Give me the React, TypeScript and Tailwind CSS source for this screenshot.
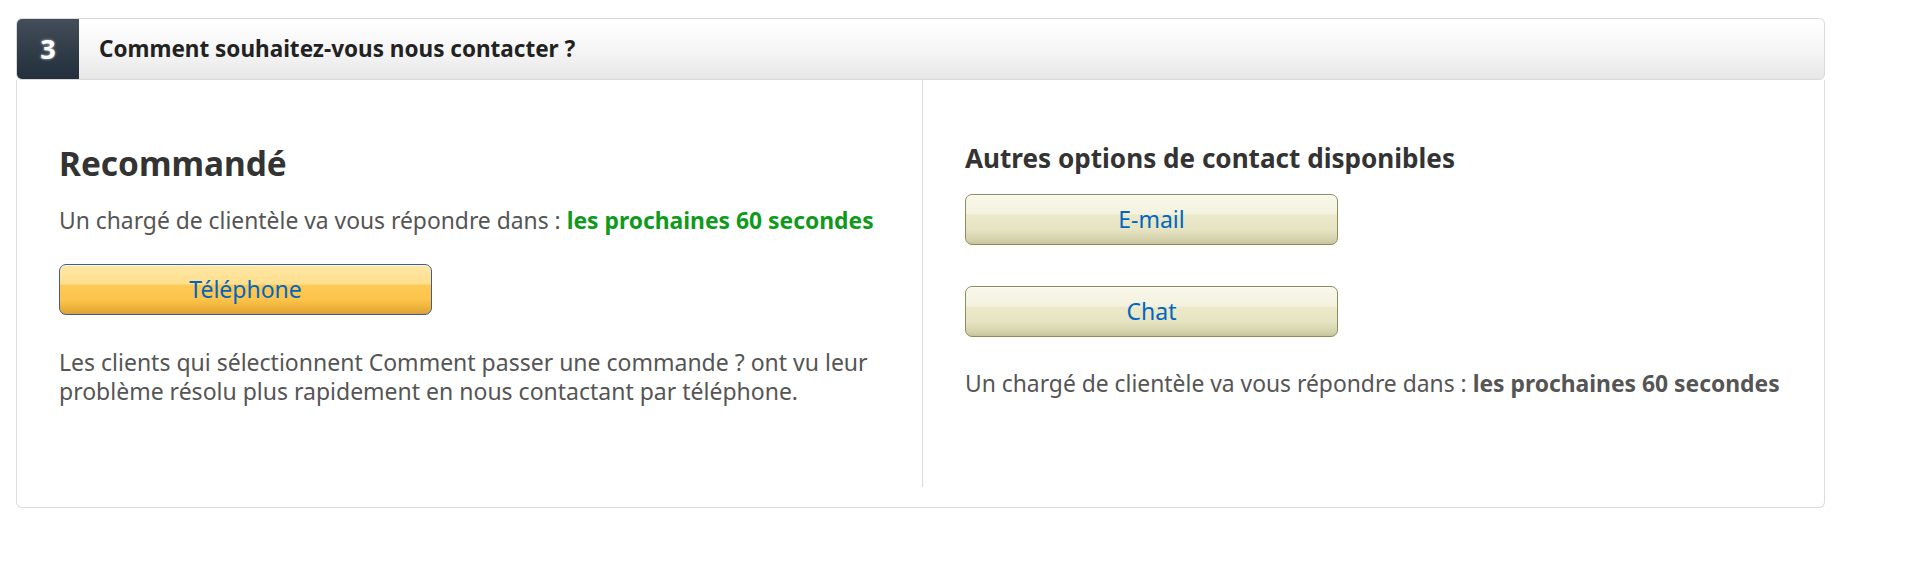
import React from "react";

const font = { fontFamily: '"Noto Sans", "Open Sans", Arial, sans-serif' };

const secondaryBtn =
  "w-[373px] h-[51px] rounded-[7px] border border-[#8e8c5e] bg-[linear-gradient(to_bottom,#f8f7ea_0%,#f4f2df_38%,#ebe9c9_42%,#e6e4c2_70%,#d4d2ac_92%,#c6c49c_100%)] shadow-[inset_0_1px_0_rgba(255,255,255,0.7)] text-[23px] text-[#0066c0] flex items-center justify-center";

export default function App() {
  return (
    <div className="bg-white w-[1918px] h-[586px] pl-[16px] pt-[18px]" style={font}>
      <div className="w-[1809px]">
        {/* Header */}
        <div className="flex h-[62px] rounded-[6px] border border-[#d9d9d9] bg-[linear-gradient(to_bottom,#ffffff_0%,#f6f6f6_50%,#e7e7e7_100%)] overflow-hidden">
          <div className="w-[62px] flex items-center justify-center bg-[linear-gradient(to_bottom,#444e5a_0%,#2f3a47_60%,#232f3e_100%)]">
            <span className="text-white font-bold text-[27px] [text-shadow:0_0_3px_rgba(255,255,255,0.7)]">3</span>
          </div>
          <div className="flex items-center pl-[20px] text-[22.5px] font-bold text-[#222]">
            Comment souhaitez-vous nous contacter ?
          </div>
        </div>
        {/* Body */}
        <div className="flex border-x border-b border-[#dcdcdc] rounded-b-[6px] h-[428px] pb-[20px]">
          <div className="w-[906px] border-r border-[#dcdcdc] pl-[42px] pt-[63px]">
            <h2 className="text-[33.4px] leading-[40px] font-bold text-[#333]">Recommandé</h2>
            <p className="mt-[23px] text-[22.85px] leading-[29px] text-[#555] whitespace-nowrap">
              Un chargé de clientèle va vous répondre dans :{" "}
              <span className="font-bold text-[#109a1c]">les prochaines 60 secondes</span>
            </p>
            <button className="mt-[29px] w-[373px] h-[51px] rounded-[7px] border border-[#405c94] bg-[linear-gradient(to_bottom,#ffe7a6_0%,#fedf8e_38%,#fdc955_42%,#fdc44b_70%,#e8ad36_92%,#d9a040_100%)] shadow-[inset_0_1px_0_rgba(255,255,255,0.6)] text-[23px] text-[#0066c0] flex items-center justify-center">
              Téléphone
            </button>
            <p className="mt-[33px] w-[840px] text-[23px] leading-[29px] text-[#555]">
              Les clients qui sélectionnent Comment passer une commande ? ont vu leur problème résolu plus rapidement en nous contactant par téléphone.
            </p>
          </div>
          <div className="flex-1 pl-[42px] pt-[63px]">
            <h3 className="text-[26.1px] leading-[30px] font-bold text-[#333]">Autres options de contact disponibles</h3>
            <button className={`mt-[21px] ${secondaryBtn}`}>E-mail</button>
            <button className={`mt-[41px] ${secondaryBtn}`}>Chat</button>
            <p className="mt-[32px] text-[22.85px] leading-[29px] text-[#555] whitespace-nowrap">
              Un chargé de clientèle va vous répondre dans :{" "}
              <span className="font-bold">les prochaines 60 secondes</span>
            </p>
          </div>
        </div>
      </div>
    </div>
  );
}
